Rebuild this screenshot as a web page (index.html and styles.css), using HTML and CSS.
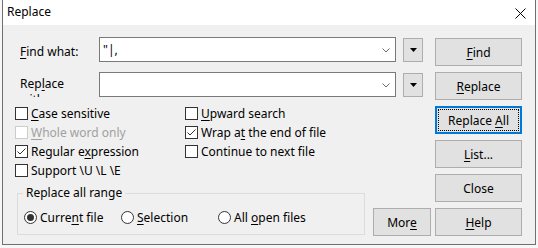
FILE: index.html
```html
<!DOCTYPE html>
<html lang="en">
<head>
    <meta charset="UTF-8">
    <title>Replace</title>
    <link rel="stylesheet" href="styles.css">
</head>
<body>
    <div class="window">
        <div class="titlebar">
            <span class="title">Replace</span>
            <svg class="close" width="11" height="11" viewBox="0 0 11 11">
                <path d="M0.5 0.5 L10.5 10.5 M10.5 0.5 L0.5 10.5" stroke="#000" stroke-width="1" fill="none"/>
            </svg>
        </div>

        <div class="content">
            <div class="main">
                <div class="field-row">
                    <div class="field-label"><u>F</u>ind what:</div>
                    <div class="combo">
                        <span class="combo-text">"|,</span>
                        <svg class="chevron" width="8" height="5" viewBox="0 0 8 5">
                            <path d="M0.5 0.5 L4 4 L7.5 0.5" stroke="#6d6d6d" fill="none"/>
                        </svg>
                    </div>
                    <div class="dd-btn">
                        <svg width="7" height="4" viewBox="0 0 7 4"><path d="M0 0 H7 L3.5 4 Z" fill="#000"/></svg>
                    </div>
                </div>

                <div class="field-row second">
                    <div class="field-label clipped">Rep<u>l</u>ace with:</div>
                    <div class="combo">
                        <span class="combo-text"></span>
                        <svg class="chevron" width="8" height="5" viewBox="0 0 8 5">
                            <path d="M0.5 0.5 L4 4 L7.5 0.5" stroke="#6d6d6d" fill="none"/>
                        </svg>
                    </div>
                    <div class="dd-btn">
                        <svg width="7" height="4" viewBox="0 0 7 4"><path d="M0 0 H7 L3.5 4 Z" fill="#000"/></svg>
                    </div>
                </div>

                <div class="options">
                    <div class="opt-col">
                        <div class="opt"><span class="box"></span><span><u>C</u>ase sensitive</span></div>
                        <div class="opt disabled"><span class="box"></span><span><u>W</u>hole word only</span></div>
                        <div class="opt">
                            <span class="box"><svg width="11" height="11" viewBox="0 0 11 11"><path d="M1.5 5.5 L4 8 L9.5 2.5" stroke="#333" fill="none"/></svg></span>
                            <span>Regular e<u>x</u>pression</span>
                        </div>
                        <div class="opt"><span class="box"></span><span>Support \U \L \E</span></div>
                    </div>
                    <div class="opt-col">
                        <div class="opt"><span class="box"></span><span><u>U</u>pward search</span></div>
                        <div class="opt">
                            <span class="box"><svg width="11" height="11" viewBox="0 0 11 11"><path d="M1.5 5.5 L4 8 L9.5 2.5" stroke="#333" fill="none"/></svg></span>
                            <span>Wrap a<u>t</u> the end of file</span>
                        </div>
                        <div class="opt"><span class="box"></span><span>Continue to next file</span></div>
                    </div>
                </div>

                <div class="bottom-row">
                    <fieldset class="range">
                        <legend>Replace all range</legend>
                        <div class="radios">
                            <div class="radio-item"><span class="radio checked"></span><span>Curre<u>n</u>t file</span></div>
                            <div class="radio-item"><span class="radio"></span><span><u>S</u>election</span></div>
                            <div class="radio-item"><span class="radio"></span><span>All <u>o</u>pen files</span></div>
                        </div>
                    </fieldset>
                    <button class="btn more">Mor<u>e</u></button>
                </div>
            </div>

            <div class="buttons">
                <button class="btn"><u>F</u>ind</button>
                <button class="btn"><u>R</u>eplace</button>
                <button class="btn focused"><span class="focus-ring"><span>Replace <u>A</u>ll</span></span></button>
                <button class="btn"><u>L</u>ist...</button>
                <button class="btn">Close</button>
                <button class="btn"><u>H</u>elp</button>
            </div>
        </div>
    </div>
</body>
</html>
```

FILE: styles.css
```css
body {
    margin: 0;
    background-color: #f7f7f7;
    font-family: "Noto Sans", "Liberation Sans", sans-serif;
    font-size: 12px;
    color: #000;
}
u {
    text-underline-offset: 2px;
}
.window {
    margin-left: 2px;
    width: 532px;
    height: 244px;
    border: 1px solid #707070;
    border-top: none;
    background-color: #f0f0f0;
    display: flex;
    flex-direction: column;
}
.titlebar {
    height: 25px;
    background-color: #fff;
    display: flex;
    justify-content: space-between;
    align-items: flex-start;
    padding: 0 9px 0 4px;
}
.title {
    line-height: 16px;
    padding-top: 4px;
}
.close {
    margin-top: 8px;
}
.content {
    display: flex;
    padding: 12px 13px 0 12px;
}
.main {
    width: 420px;
}
.field-row {
    display: flex;
    align-items: flex-start;
    height: 25px;
}
.field-row.second {
    margin-top: 10px;
}
.field-label {
    width: 79px;
    padding-left: 5px;
    line-height: 16px;
    padding-top: 7px;
}
.field-label.clipped {
    width: 60px;
    padding-right: 19px;
    padding-top: 4px;
    height: 21px;
    overflow: hidden;
}
.combo {
    width: 297px;
    height: 25px;
    box-sizing: border-box;
    border: 1px solid #7a7a7a;
    background-color: #fff;
    display: flex;
    align-items: center;
    justify-content: space-between;
    padding: 0 5px 0 3px;
}
.combo-text {
    line-height: 16px;
}
.chevron {
    margin-top: 1px;
}
.dd-btn {
    width: 20px;
    height: 24px;
    box-sizing: border-box;
    margin: 1px 0 0 7px;
    background-color: #e1e1e1;
    border: 1px solid #adadad;
    display: flex;
    align-items: center;
    justify-content: center;
}
.options {
    display: flex;
    margin-top: 7px;
}
.opt-col {
    width: 170px;
}
.opt {
    display: flex;
    align-items: center;
    height: 19px;
}
.box {
    width: 13px;
    height: 13px;
    box-sizing: border-box;
    border: 1px solid #333;
    background-color: #fff;
    margin-right: 3px;
    display: flex;
}
.opt.disabled {
    color: #a0a0a0;
}
.opt.disabled .box {
    border-color: #cccccc;
}
.bottom-row {
    display: flex;
    align-items: flex-start;
    margin-top: 5px;
}
.range {
    width: 348px;
    box-sizing: border-box;
    margin: 0 0 0 2px;
    padding: 7px 5px 8px 5px;
    border: 1px solid #dcdcdc;
    min-width: 0;
}
.range legend {
    padding: 0 3px;
    line-height: 16px;
}
.radios {
    display: flex;
    align-items: center;
    height: 18px;
}
.radio-item {
    display: flex;
    align-items: center;
    width: 96px;
    padding-left: 1px;
}
.radio {
    width: 13px;
    height: 13px;
    box-sizing: border-box;
    border: 1px solid #333;
    border-radius: 50%;
    background-color: #fff;
    margin-right: 3px;
    display: flex;
    align-items: center;
    justify-content: center;
}
.radio.checked::after {
    content: "";
    width: 7px;
    height: 7px;
    border-radius: 50%;
    background-color: #333;
}
.buttons {
    display: flex;
    flex-direction: column;
    gap: 6px;
    margin-top: 1px;
}
.btn {
    width: 87px;
    height: 28px;
    padding: 0;
    background-color: #e1e1e1;
    border: 1px solid #adadad;
    font-family: inherit;
    font-size: 12px;
    color: #000;
}
.btn.more {
    width: 58px;
    margin: 23px 0 0 8px;
}
.btn.focused {
    border: 2px solid #0078d7;
    padding: 1px;
}
.focus-ring {
    display: flex;
    align-items: center;
    justify-content: center;
    height: 100%;
    box-sizing: border-box;
    border: 1px dotted #000;
}
```
